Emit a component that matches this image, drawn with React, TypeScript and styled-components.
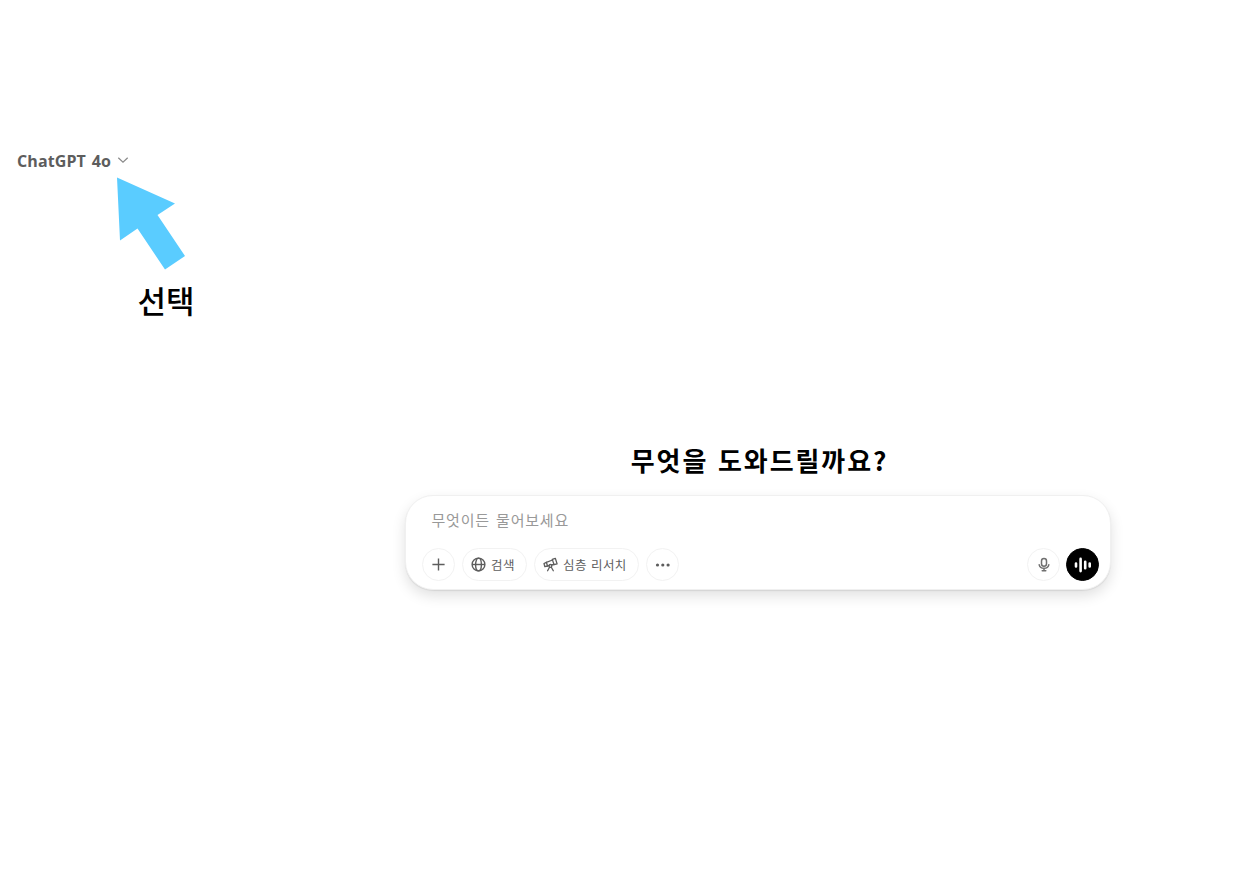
import React from 'react';
import styled, { createGlobalStyle } from 'styled-components';

const GlobalStyle = createGlobalStyle`
  * {
    box-sizing: border-box;
  }

  body {
    margin: 0;
    background: #fff;
    font-family: 'Noto Sans CJK KR', sans-serif;
  }
`;

const Page = styled.main`
  min-height: 891px;
  padding-top: 148px;
  background: #fff;
`;

const ModelButton = styled.button`
  display: flex;
  align-items: center;
  gap: 6px;
  height: 26px;
  margin-left: 17px;
  padding: 0;
  border: 0;
  background: none;
  color: #5d5d5d;
  font-family: 'Open Sans', sans-serif;
  font-size: 16px;
  font-weight: 700;
  letter-spacing: 0.1px;
  word-spacing: 1.5px;
  white-space: nowrap;

  svg {
    margin-bottom: 2px;
  }
`;

const Hint = styled.div`
  display: flex;
  flex-direction: column;
  width: 100px;
  height: 150px;
  margin: 3px 0 0 116px;
`;

const HintLabel = styled.div`
  margin: 6px 0 0 21.5px;
  color: #000;
  font-size: 31px;
  font-weight: 500;
  line-height: 46px;
  white-space: nowrap;
`;

const Chat = styled.section`
  width: 706px;
  margin: 111px 0 0 405px;
`;

const Title = styled.h1`
  height: 44px;
  margin: 0 0 13px;
  padding-left: 3px;
  color: #000;
  font-size: 26px;
  font-weight: 700;
  line-height: 44px;
  letter-spacing: 1.9px;
  word-spacing: 2px;
  text-align: center;
  white-space: nowrap;
`;

const Composer = styled.div`
  display: flex;
  flex-direction: column;
  justify-content: space-between;
  height: 95px;
  padding: 12px 11px 8px 16px;
  border: 1px solid #f0f0f0;
  border-radius: 28px;
  background: #fff;
  box-shadow: 0 6px 14px rgba(0, 0, 0, 0.12), 0 1px 1px rgba(0, 0, 0, 0.08);
`;

const Placeholder = styled.div`
  padding-left: 9.5px;
  color: #999;
  font-size: 15px;
  line-height: 24px;
  letter-spacing: 0.8px;
  word-spacing: 2px;
`;

const Toolbar = styled.div`
  display: flex;
  align-items: center;
  gap: 7px;
`;

const Pill = styled.button<{ $width?: number; $dark?: boolean }>`
  display: flex;
  align-items: center;
  justify-content: ${({ $width }) => ($width ? 'flex-start' : 'center')};
  gap: 5px;
  width: ${({ $width }) => $width || 33}px;
  height: 33px;
  padding: 0 0 0 ${({ $width }) => ($width ? 8 : 0)}px;
  border: 1px solid ${({ $dark }) => ($dark ? '#000' : '#f2f2f2')};
  border-radius: 17px;
  background: ${({ $dark }) => ($dark ? '#000' : '#fff')};
  color: ${({ $dark }) => ($dark ? '#fff' : '#5d5d5d')};
  font-family: inherit;
  font-size: 12.5px;
  letter-spacing: 0.4px;
  word-spacing: 1px;
  white-space: nowrap;

  svg {
    flex: none;
  }
`;

const Actions = styled.div`
  display: flex;
  gap: 6px;
  margin-left: auto;
`;

const ChevronIcon = () => (
  <svg width="12" height="12" viewBox="0 0 12 12" fill="none" stroke="#8a8a8a" strokeWidth="1.2">
    <path d="M1.3 3.7L6 8.2L10.7 3.7" />
  </svg>
);

const ArrowIcon = () => (
  <svg width="70" height="94" viewBox="0 0 70 94" fill="#5accff">
    <path d="M1 0.5L59 26.5L41.5 38L69 79L49 92.5L21.5 51.5L4 63.5Z" />
  </svg>
);

const PlusIcon = () => (
  <svg width="13" height="13" viewBox="0 0 13 13" fill="none" stroke="currentColor" strokeWidth="1.4">
    <path d="M6.5 0.4V12.6M0.4 6.5H12.6" />
  </svg>
);

const GlobeIcon = () => (
  <svg width="15" height="15" viewBox="0 0 15 15" fill="none" stroke="currentColor" strokeWidth="1.4">
    <circle cx="7.5" cy="7.5" r="6.4" />
    <ellipse cx="7.5" cy="7.5" rx="2.9" ry="6.4" />
    <path d="M1.1 7.5H13.9" />
  </svg>
);

const TelescopeIcon = () => (
  <svg width="15" height="15" viewBox="0 0 15 15" fill="none" stroke="currentColor" strokeWidth="1.3" strokeLinecap="round" strokeLinejoin="round">
    <path d="M9.3 2.4L12.3 1.3L14.1 6.9L11 7.6Z" />
    <path d="M9.5 3L3.4 5.3L4.5 9L6.2 8.6M8.7 8L11 7.5" />
    <path d="M3.4 5.3L1 6.6L1.8 9.7L4.5 9" />
    <circle cx="7.4" cy="8.9" r="1.4" />
    <path d="M6.5 10.2L4.6 13.7M8.3 10.2L10.3 13.7" />
  </svg>
);

const DotsIcon = () => (
  <svg width="16" height="6" viewBox="0 0 16 6" fill="currentColor">
    <circle cx="2.5" cy="3" r="1.6" />
    <circle cx="7.8" cy="3" r="1.6" />
    <circle cx="13.1" cy="3" r="1.6" />
  </svg>
);

const MicIcon = () => (
  <svg width="14" height="15" viewBox="0 0 14 15" fill="none" stroke="#707070" strokeWidth="1.5" strokeLinecap="round">
    <rect x="4.5" y="1.4" width="5" height="7.8" rx="2.5" />
    <path d="M2.2 7.8C2.7 10.1 4.5 11.3 7 11.3S11.3 10.1 11.8 7.8M7 11.3V13.5M5.2 13.7H8.8" />
  </svg>
);

const VoiceIcon = () => (
  <svg width="18" height="18" viewBox="0 0 18 18" fill="none" stroke="currentColor" strokeWidth="2.6" strokeLinecap="round">
    <path d="M2 7.6V10.4M6.6 2.9V15.1M11.2 5.8V12.2M15.7 7.6V10.4" />
  </svg>
);

const App: React.FC = () => {
  return (
    <Page>
      <GlobalStyle />
      <ModelButton>
        ChatGPT 4o
        <ChevronIcon />
      </ModelButton>

      <Hint>
        <ArrowIcon />
        <HintLabel>선택</HintLabel>
      </Hint>

      <Chat>
        <Title>무엇을 도와드릴까요?</Title>
        <Composer>
          <Placeholder>무엇이든 물어보세요</Placeholder>
          <Toolbar>
            <Pill aria-label="추가">
              <PlusIcon />
            </Pill>
            <Pill $width={65}>
              <GlobeIcon />
              검색
            </Pill>
            <Pill $width={105}>
              <TelescopeIcon />
              심층 리서치
            </Pill>
            <Pill aria-label="더 보기">
              <DotsIcon />
            </Pill>
            <Actions>
              <Pill aria-label="음성 입력">
                <MicIcon />
              </Pill>
              <Pill $dark aria-label="음성 모드">
                <VoiceIcon />
              </Pill>
            </Actions>
          </Toolbar>
        </Composer>
      </Chat>
    </Page>
  );
};

export default App;
